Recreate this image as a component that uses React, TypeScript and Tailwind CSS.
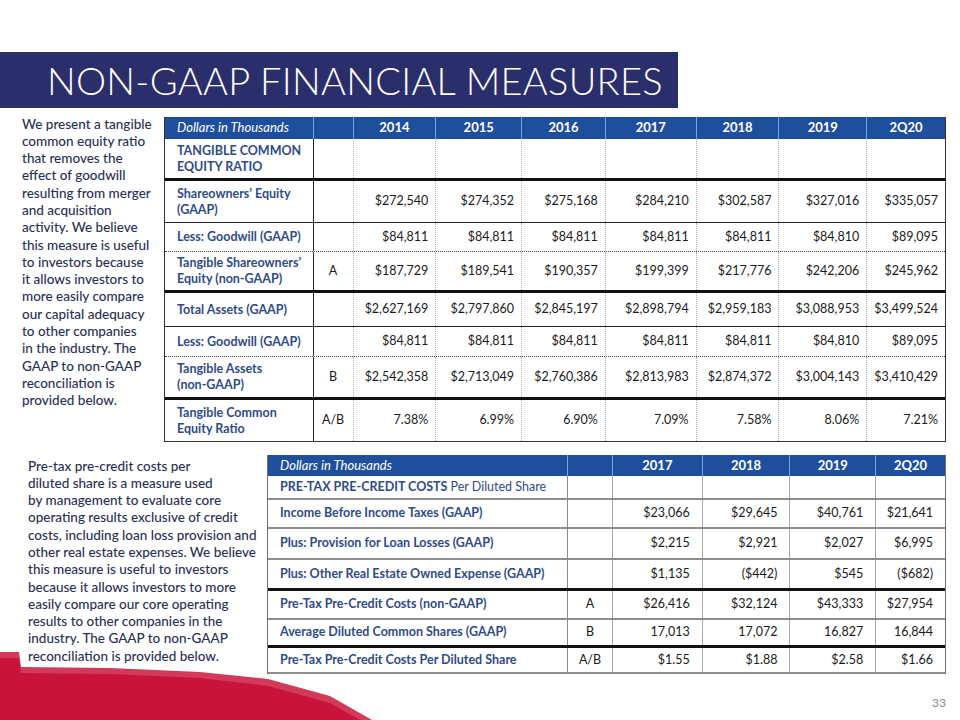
import React from "react";

const FONT = { fontFamily: "Lato, 'Open Sans', Arial, sans-serif" };

type Row1 = { label: React.ReactNode; letter: string; vals: string[]; h: string; border: string };

const t1Widths = ["w-[83px]", "w-[86px]", "w-[84px]", "w-[91px]", "w-[83px]", "w-[88px]", "w-[78px]"];
const t1Years = ["2014", "2015", "2016", "2017", "2018", "2019", "2Q20"];

const good = ["$84,811", "$84,811", "$84,811", "$84,811", "$84,811", "$84,810", "$89,095"];

const rows1: Row1[] = [
  { label: <>TANGIBLE COMMON<br />EQUITY RATIO</>, letter: "", vals: ["", "", "", "", "", "", ""], h: "h-[42px]", border: "border-b-[3px] border-[#111]" },
  { label: <>Shareowners’ Equity<br />(GAAP)</>, letter: "", vals: ["$272,540", "$274,352", "$275,168", "$284,210", "$302,587", "$327,016", "$335,057"], h: "h-[42px]", border: "border-b border-[#222]" },
  { label: <>Less: Goodwill (GAAP)</>, letter: "", vals: good, h: "h-[29px]", border: "border-b border-dotted border-[#444]" },
  { label: <>Tangible Shareowners’<br />Equity (non-GAAP)</>, letter: "A", vals: ["$187,729", "$189,541", "$190,357", "$199,399", "$217,776", "$242,206", "$245,962"], h: "h-[41px]", border: "border-b-[3px] border-[#111]" },
  { label: <>Total Assets (GAAP)</>, letter: "", vals: ["$2,627,169", "$2,797,860", "$2,845,197", "$2,898,794", "$2,959,183", "$3,088,953", "$3,499,524"], h: "h-[34px]", border: "border-b border-[#222]" },
  { label: <>Less: Goodwill (GAAP)</>, letter: "", vals: good, h: "h-[30px]", border: "border-b border-dotted border-[#444]" },
  { label: <>Tangible Assets<br />(non-GAAP)</>, letter: "B", vals: ["$2,542,358", "$2,713,049", "$2,760,386", "$2,813,983", "$2,874,372", "$3,004,143", "$3,410,429"], h: "h-[43px]", border: "border-b-[3px] border-[#111]" },
  { label: <>Tangible Common<br />Equity Ratio</>, letter: "A/B", vals: ["7.38%", "6.99%", "6.90%", "7.09%", "7.58%", "8.06%", "7.21%"], h: "h-[42px]", border: "border-b border-[#333]" },
];

const t2Widths = ["w-[90px]", "w-[88px]", "w-[86px]", "w-[69px]"];
const t2Years = ["2017", "2018", "2019", "2Q20"];

type Row2 = { label: React.ReactNode; letter: string; vals: string[]; h: string; border: string };

const rows2: Row2[] = [
  { label: <><span className="font-bold">PRE-TAX PRE-CREDIT COSTS</span> <span className="font-normal">Per Diluted Share</span></>, letter: "", vals: ["", "", "", ""], h: "h-[24px]", border: "border-b-2 border-[#8d8d8d]" },
  { label: <>Income Before Income Taxes (GAAP)</>, letter: "", vals: ["$23,066", "$29,645", "$40,761", "$21,641"], h: "h-[29px]", border: "border-b-2 border-[#8d8d8d]" },
  { label: <>Plus: Provision for Loan Losses (GAAP)</>, letter: "", vals: ["$2,215", "$2,921", "$2,027", "$6,995"], h: "h-[31px]", border: "border-b-2 border-[#8d8d8d]" },
  { label: <>Plus: Other Real Estate Owned Expense (GAAP)</>, letter: "", vals: ["$1,135", "($442)", "$545", "($682)"], h: "h-[31px]", border: "border-b-[3px] border-[#111]" },
  { label: <>Pre-Tax Pre-Credit Costs (non-GAAP)</>, letter: "A", vals: ["$26,416", "$32,124", "$43,333", "$27,954"], h: "h-[29px]", border: "border-b-2 border-[#8d8d8d]" },
  { label: <>Average Diluted Common Shares (GAAP)</>, letter: "B", vals: ["17,013", "17,072", "16,827", "16,844"], h: "h-[28px]", border: "border-b-[3px] border-[#111]" },
  { label: <>Pre-Tax Pre-Credit Costs Per Diluted Share</>, letter: "A/B", vals: ["$1.55", "$1.88", "$2.58", "$1.66"], h: "h-[26px]", border: "border-b-2 border-[#8d8d8d]" },
];

function Table1() {
  return (
    <div className="w-[782px] shrink-0 border-l border-r border-[#333] flex flex-col bg-white">
      <div className="flex h-[22px] bg-[#1f4f9c] text-white text-[13px]">
        <div className="w-[149px] border-r border-[#7ea2dd] pl-[12px] flex items-center italic whitespace-nowrap">Dollars in Thousands</div>
        <div className="w-[40px] border-r border-[#7ea2dd]" />
        {t1Years.map((y, i) => (
          <div key={y} className={`${t1Widths[i]} ${i < 6 ? "border-r border-[#7ea2dd]" : ""} flex items-center justify-center font-bold`}>{y}</div>
        ))}
      </div>
      {rows1.map((r, ri) => (
        <div key={ri} className={`flex ${r.h} ${r.border} box-border`}>
          <div className="w-[149px] border-r border-[#222] pl-[12px] flex items-center text-[12.5px] leading-[16px] font-bold text-[#2f4b88] whitespace-nowrap">
            <div>{r.label}</div>
          </div>
          <div className="w-[40px] border-r border-dotted border-[#b0b0b0] flex items-center justify-center text-[12.5px] text-[#1a1a1a]">{r.letter}</div>
          {r.vals.map((v, i) => (
            <div key={i} className={`${t1Widths[i]} ${i < 6 ? "border-r border-dotted border-[#b0b0b0]" : ""} flex items-center justify-end pr-[7px] text-[12.5px] text-[#1a1a1a] whitespace-nowrap`}>{v}</div>
          ))}
        </div>
      ))}
    </div>
  );
}

function Table2() {
  return (
    <div className="w-[679px] shrink-0 border-l border-r border-[#6f6f6f] flex flex-col bg-white relative z-10">
      <div className="flex h-[21px] bg-[#1f4f9c] text-white text-[13px]">
        <div className="w-[301px] border-r border-[#7ea2dd] pl-[12px] flex items-center italic">Dollars in Thousands</div>
        <div className="w-[45px] border-r border-[#7ea2dd]" />
        {t2Years.map((y, i) => (
          <div key={y} className={`${t2Widths[i]} ${i < 3 ? "border-r border-[#7ea2dd]" : ""} flex items-center justify-center font-bold`}>{y}</div>
        ))}
      </div>
      {rows2.map((r, ri) => (
        <div key={ri} className={`flex ${r.h} ${r.border} box-border`}>
          <div className="w-[301px] border-r border-[#8a8a8a] pl-[12px] flex items-center text-[12.5px] font-bold text-[#2f4b88] whitespace-nowrap">
            <div>{r.label}</div>
          </div>
          <div className="w-[45px] border-r border-[#a8a8a8] flex items-center justify-center text-[12.5px] text-[#1a1a1a]">{r.letter}</div>
          {r.vals.map((v, i) => (
            <div key={i} className={`${t2Widths[i]} ${i < 3 ? "border-r border-[#a8a8a8]" : ""} flex items-center justify-end pr-[12px] text-[12.5px] text-[#1a1a1a]`}>{v}</div>
          ))}
        </div>
      ))}
    </div>
  );
}

export default function App() {
  return (
    <div className="w-[960px] h-[720px] relative bg-white overflow-hidden" style={FONT}>
      <svg className="absolute left-0 top-0" width="960" height="720" viewBox="0 0 960 720">
        <polygon points="0,652 19,652 21,667 110,668 200,672 268,679 330,696 372,720 0,720" fill="#d33a5a" />
        <polygon points="0,658 19,658 21,673 110,674 200,678 268,686 330,703 360,720 0,720" fill="#c8143a" />
      </svg>
      <div className="relative flex flex-col">
        <div className="mt-[52px] h-[56px] w-[678px] bg-[#2a2e6b] flex items-center pl-[47px] overflow-hidden">
          <span className="text-white text-[38px] font-light leading-none whitespace-nowrap tracking-[0.3px]">NON-GAAP FINANCIAL MEASURES</span>
        </div>
        <div className="flex mt-[9px]">
          <p className="w-[164px] shrink-0 pl-[22px] mt-[-1.5px] text-[13.5px] leading-[17.3px] text-[#2a3054] font-medium box-border whitespace-nowrap">
            We present a tangible<br />common equity ratio<br />that removes the<br />effect of goodwill<br />resulting from merger<br />and acquisition<br />activity. We believe<br />this measure is useful<br />to investors because<br />it allows investors to<br />more easily compare<br />our capital adequacy<br />to other companies<br />in the industry. The<br />GAAP to non-GAAP<br />reconciliation is<br />provided below.
          </p>
          <Table1 />
        </div>
        <div className="flex mt-[13px]">
          <p className="w-[267px] shrink-0 pl-[28px] mt-[2.5px] text-[13.5px] leading-[17.3px] text-[#2a3054] font-medium box-border whitespace-nowrap">
            Pre-tax pre-credit costs per<br />diluted share is a measure used<br />by management to evaluate core<br />operating results exclusive of credit<br />costs, including loan loss provision and<br />other real estate expenses. We believe<br />this measure is useful to investors<br />because it allows investors to more<br />easily compare our core operating<br />results to other companies in the<br />industry. The GAAP to non-GAAP<br />reconciliation is provided below.
          </p>
          <Table2 />
        </div>
      </div>
      <div className="absolute right-[14px] bottom-[8px] text-[12px] text-[#888]">33</div>
    </div>
  );
}
